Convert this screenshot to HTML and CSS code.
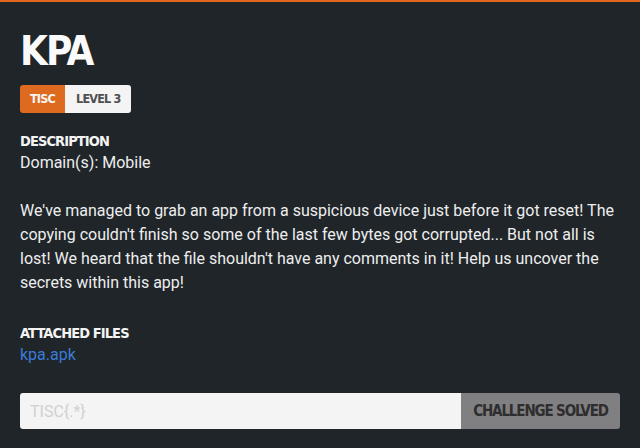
FILE: index.html
```html
<!DOCTYPE html>
<html>
<head>
<meta charset="utf-8">
<link rel="stylesheet" href="styles.css">
</head>
<body>
<div class="page">
  <h1 class="title">KPA</h1>
  <div class="badges">
    <span class="badge badge-cat">TISC</span>
    <span class="badge badge-level">LEVEL 3</span>
  </div>
  <section class="section">
    <h2 class="section-title">DESCRIPTION</h2>
    <p class="text">Domain(s): Mobile</p>
    <p class="text desc">We've managed to grab an app from a suspicious device just before it got reset! The copying couldn't finish so some of the last few bytes got corrupted... But not all is lost! We heard that the file shouldn't have any comments in it! Help us uncover the secrets within this app!</p>
  </section>
  <section class="section files">
    <h2 class="section-title">ATTACHED FILES</h2>
    <a class="file-link" href="#">kpa.apk</a>
  </section>
  <form class="flag-form">
    <input class="flag-input" type="text" placeholder="TISC{.*}">
    <button class="flag-btn" type="button">CHALLENGE SOLVED</button>
  </form>
</div>
</body>
</html>
```
FILE: styles.css
```css
html, body {
  margin: 0;
  padding: 0;
  background: #1f2529;
}
body {
  border-top: 2px solid #e0691f;
  height: 446px;
  overflow: hidden;
  font-family: Roboto, "Liberation Sans", sans-serif;
  color: #f2f2f2;
}
.page {
  padding: 0 20px;
}
.title {
  margin: 0;
  padding-top: 26px;
  font-family: "DejaVu Sans Condensed", "DejaVu Sans", sans-serif;
  font-weight: bold;
  font-size: 40px;
  line-height: 46px;
  letter-spacing: -2px;
  color: #fafafa;
}
.badges {
  display: flex;
  margin-top: 11px;
}
.badge {
  font-family: "DejaVu Sans Condensed", "DejaVu Sans", sans-serif;
  font-weight: bold;
  font-size: 12.5px;
  letter-spacing: -0.8px;
  height: 28px;
  line-height: 28px;
  padding: 0 10px;
}
.badge-cat {
  background: #de6a20;
  color: #f6f6f6;
  border-radius: 3px 0 0 3px;
}
.badge-level {
  background: #f4f4f4;
  color: #4f4f4f;
  border-radius: 0 3px 3px 0;
  padding: 0 10px 0 11px;
}
.section {
  margin-top: 18px;
}
.section-title {
  margin: 0;
  font-family: "DejaVu Sans Condensed", "DejaVu Sans", sans-serif;
  font-weight: bold;
  font-size: 14.5px;
  letter-spacing: -0.9px;
  line-height: 20px;
  color: #f4f4f4;
}
.text {
  margin: 0;
  font-size: 16px;
  line-height: 24px;
  color: #eeeeee;
}
.desc {
  margin-top: 24px;
}
.files {
  margin-top: 28px;
}
.file-link {
  display: block;
  font-size: 16px;
  line-height: 24px;
  color: #3a7bd5;
  text-decoration: none;
}
.flag-form {
  display: flex;
  margin-top: 26px;
  height: 36px;
}
.flag-input {
  flex: 1;
  border: none;
  margin: 0;
  background: #f4f4f4;
  border-radius: 3px 0 0 3px;
  padding: 0 10px;
  font-family: Roboto, sans-serif;
  font-size: 16px;
  color: #333;
  outline: none;
}
.flag-input::placeholder {
  color: #d0d0d0;
}
.flag-btn {
  border: none;
  margin: 0;
  width: 159px;
  background: #808082;
  color: #2e2e2e;
  border-radius: 0 3px 3px 0;
  font-family: "DejaVu Sans Condensed", "DejaVu Sans", sans-serif;
  font-weight: bold;
  font-size: 15px;
  letter-spacing: -1.15px;
  padding: 0;
}
```
